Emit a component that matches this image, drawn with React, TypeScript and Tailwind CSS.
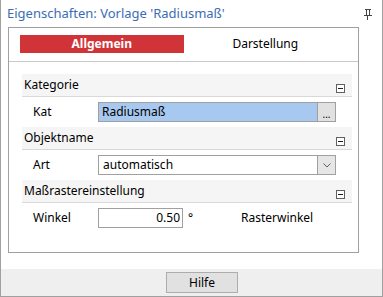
import React from "react";

const font = { fontFamily: '"Noto Sans", "Open Sans", sans-serif' };

function Minus() {
  return (
    <div className="w-[9px] h-[9px] border border-[#606060] bg-white flex items-center justify-center mb-[3px]">
      <div className="w-[5px] h-[1px] bg-[#202020]" />
    </div>
  );
}

function Header({ title }: { title: string }) {
  return (
    <div className="h-[23px] bg-[#f5f5f5] border-b border-[#d9d9d9] flex items-end justify-between pl-[2px] pr-[7px]">
      <span className="text-[12px] leading-[20px] text-black self-center">{title}</span>
      <Minus />
    </div>
  );
}

function Row({ label, children }: { label: string; children: React.ReactNode }) {
  return (
    <div className="h-[30px] flex items-center pl-[11px]">
      <span className="w-[65px] text-[12px] text-black">{label}</span>
      {children}
    </div>
  );
}

export default function App() {
  return (
    <div
      className="w-[383px] h-[297px] bg-white border-l border-r border-b border-[#a0a0a0] flex flex-col"
      style={font}
    >
      <div className="h-[27px] flex items-center justify-between pl-[6px] pr-[10px]">
        <span className="text-[13px] text-[#3b6db6] leading-none">Eigenschaften: Vorlage 'Radiusmaß'</span>
        <svg width="8" height="11" viewBox="0 0 8 11" className="mt-[1px]">
          <rect x="1" y="0" width="6" height="1" fill="#444" />
          <rect x="2" y="1" width="1" height="6" fill="#444" />
          <rect x="5" y="1" width="1" height="6" fill="#444" />
          <rect x="0" y="6" width="8" height="1" fill="#444" />
          <rect x="3" y="7" width="1" height="4" fill="#444" />
        </svg>
      </div>
      <div className="ml-[7px] mr-[23px] h-[226px] border border-[#a0a0a0] flex flex-col">
        <div className="h-[34px] border-b border-[#c8c8c8] pt-[7px] px-[11px] flex">
          <div className="w-[164px] h-[18px] bg-[#d13438] flex items-center justify-center">
            <span className="text-[12px] font-bold text-white">Allgemein</span>
          </div>
          <div className="w-[164px] h-[18px] flex items-center justify-center">
            <span className="text-[12px] text-black">Darstellung</span>
          </div>
        </div>
        <div className="pl-[13px] pr-[6px] pt-[12px] flex flex-col">
          <Header title="Kategorie" />
          <Row label="Kat">
            <div className="flex h-[20px]">
              <div className="w-[220px] h-[20px] bg-[#a7c9ef] border border-[#a0a0a0] flex items-center px-[3px]">
                <span className="text-[12px] text-black">Radiusmaß</span>
              </div>
              <div className="w-[18px] h-[20px] bg-[#e1e1e1] border border-l-0 border-[#a0a0a0] flex items-center justify-center">
                <span className="text-[10px] text-black leading-none mt-[3px]">...</span>
              </div>
            </div>
          </Row>
          <Header title="Objektname" />
          <Row label="Art">
            <div className="flex h-[20px]">
              <div className="w-[220px] h-[20px] bg-white border border-[#a0a0a0] flex items-center px-[4px]">
                <span className="text-[12px] text-black">automatisch</span>
              </div>
              <div className="w-[18px] h-[20px] bg-[#e6e6e6] border border-l-0 border-[#a0a0a0] flex items-center justify-center">
                <svg width="8" height="5" viewBox="0 0 8 5">
                  <path d="M0.5 0.5 L4 4 L7.5 0.5" stroke="#606060" fill="none" strokeWidth="1" />
                </svg>
              </div>
            </div>
          </Row>
          <Header title="Maßrastereinstellung" />
          <Row label="Winkel">
            <div className="w-[85px] h-[20px] bg-white border border-[#a0a0a0] flex items-center justify-end px-[2px]">
              <span className="text-[12px] text-black">0.50</span>
            </div>
            <span className="text-[12px] text-black ml-[5px] w-[53px]">°</span>
            <span className="text-[12px] text-black">Rasterwinkel</span>
          </Row>
        </div>
      </div>
      <div className="flex-1" />
      <div className="h-[27px] bg-[#efefef] flex items-center pl-[165px]">
        <div className="w-[72px] h-[21px] bg-[#e1e1e1] border border-[#adadad] flex items-center justify-center">
          <span className="text-[12px] text-black">Hilfe</span>
        </div>
      </div>
    </div>
  );
}
